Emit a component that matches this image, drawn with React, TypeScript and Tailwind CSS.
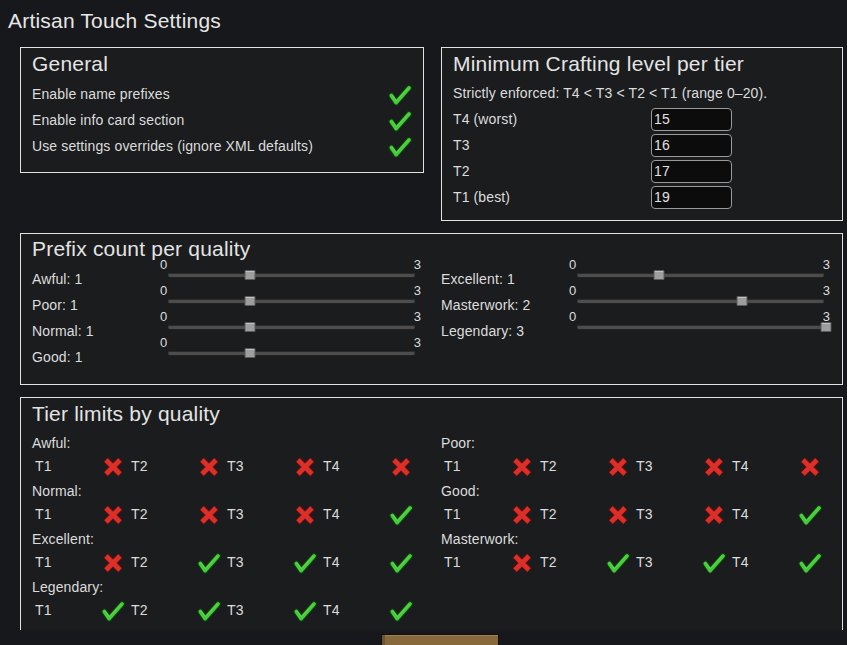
import React from "react";

const Check = () => (
  <svg width="24" height="24" viewBox="0 0 24 24" className="block shrink-0">
    <path d="M3.4 12.6 L8.2 19.6 L21 5" fill="none" stroke="#143a11" strokeWidth="6" strokeLinecap="round" strokeLinejoin="round" />
    <path d="M3.4 12.6 L8.2 19.6 L21 5" fill="none" stroke="#44cc3a" strokeWidth="3.8" strokeLinecap="round" strokeLinejoin="round" />
    <path d="M4.3 12.4 L8.2 17.8 L20.2 5.4" fill="none" stroke="#6be05f" strokeWidth="1" strokeLinecap="round" strokeLinejoin="round" opacity="0.6" />
  </svg>
);

const Cross = () => (
  <svg width="24" height="24" viewBox="0 0 24 24" className="block shrink-0">
    <path d="M4.6 4.6 L19.4 19.4 M19.4 4.6 L4.6 19.4" fill="none" stroke="#5c1211" strokeWidth="6.6" />
    <path d="M5 5 L19 19 M19 5 L5 19" fill="none" stroke="#dd2f2a" strokeWidth="4.6" />
  </svg>
);

function Slider({ value }: { value: number }) {
  const px = Math.min((value / 3) * 247, 249 - 3);
  return (
    <div className="w-[261px] -mt-[9px] shrink-0">
      <div className="flex justify-between text-[13px] leading-[15px] h-[15px]">
        <span>0</span>
        <span>3</span>
      </div>
      <div className="relative ml-[8px] mr-[6px] mt-[1px] h-[4px] rounded-[2px] bg-[#4d4d4d] shadow-[inset_0_1px_0_#2a2a2a,0_1px_0_#222]">
        <div
          className="absolute top-1/2 w-[11px] h-[10px] -translate-y-1/2 -translate-x-1/2 bg-[#9e9e9e] border border-[#5a5a5a] rounded-[1px] shadow-[inset_0_1px_0_#c0c0c0]"
          style={{ left: `${value === 3 ? px + 3 : px}px` }}
        />
      </div>
    </div>
  );
}

function PrefixRow({ label, value }: { label: string; value: number }) {
  return (
    <div className="flex h-[26px]">
      <div className="w-[128px] leading-[26px] shrink-0">{label}</div>
      <Slider value={value} />
    </div>
  );
}

type Quality = { name: string; tiers: boolean[] };

function TierBlock({ q }: { q: Quality }) {
  return (
    <div>
      <div className="h-[24px] leading-[24px]">{q.name}:</div>
      <div className="flex h-[24px]">
        {q.tiers.map((ok, i) => (
          <div key={i} className="w-[96px] flex items-center pl-[3px]">
            <div className="w-[66px] leading-[22px] pb-[2px]">T{i + 1}</div>
            {ok ? <Check /> : <Cross />}
          </div>
        ))}
      </div>
    </div>
  );
}

const Heading = ({ children }: { children: React.ReactNode }) => (
  <div className="h-[24px] leading-[24px] text-[21px] tracking-[0.2px] text-[#e4e4e4]">{children}</div>
);

export default function App() {
  const leftQ: Quality[] = [
    { name: "Awful", tiers: [false, false, false, false] },
    { name: "Normal", tiers: [false, false, false, true] },
    { name: "Excellent", tiers: [false, true, true, true] },
    { name: "Legendary", tiers: [true, true, true, true] },
  ];
  const rightQ: Quality[] = [
    { name: "Poor", tiers: [false, false, false, false] },
    { name: "Good", tiers: [false, false, false, true] },
    { name: "Masterwork", tiers: [false, true, true, true] },
  ];
  const tiers = [
    { label: "T4 (worst)", v: "15" },
    { label: "T3", v: "16" },
    { label: "T2", v: "17" },
    { label: "T1 (best)", v: "19" },
  ];
  return (
    <div className="w-[847px] h-[645px] overflow-hidden bg-[#16181b] text-[#dcdcdc] text-[14px] tracking-[0.12px] font-['Liberation_Sans',Arial,sans-serif]">
      <div className="h-[47px] pl-[8px] pt-[9px] text-[21px] leading-[24px] tracking-[0.2px] text-[#e6e6e6]">
        Artisan Touch Settings
      </div>
      <div className="h-[583px] overflow-hidden pl-[20px] pr-[4px] flex flex-col gap-[12px]">
        <div className="flex items-start gap-[17px]">
          <div className="w-[404px] h-[126px] border border-[#e2e2e2] bg-[#1b1c1e] px-[11px] pt-[4px]">
            <Heading>General</Heading>
            <div className="mt-[5px]">
              {[
                "Enable name prefixes",
                "Enable info card section",
                "Use settings overrides (ignore XML defaults)",
              ].map((t) => (
                <div key={t} className="h-[26px] flex items-center justify-between">
                  <span>{t}</span>
                  <span className="mt-[1px]"><Check /></span>
                </div>
              ))}
            </div>
          </div>
          <div className="w-[402px] h-[174px] border border-[#e2e2e2] bg-[#1b1c1e] px-[11px] pt-[4px]">
            <Heading>Minimum Crafting level per tier</Heading>
            <div className="mt-[4px] h-[26px] leading-[26px]">Strictly enforced: T4 &lt; T3 &lt; T2 &lt; T1 (range 0–20).</div>
            {tiers.map((t) => (
              <div key={t.label} className="h-[26px] flex items-center">
                <div className="w-[198px] shrink-0">{t.label}</div>
                <div className="w-[81px] h-[23px] border border-[#9a9a9a] rounded-[4px] bg-[#0c0c0d] pl-[2px] leading-[21px] text-[#e0e0e0]">
                  {t.v}
                </div>
              </div>
            ))}
          </div>
        </div>

        <div className="w-[823px] h-[152px] shrink-0 border border-[#e2e2e2] bg-[#1b1c1e] px-[11px] pt-[3px]">
          <Heading>Prefix count per quality</Heading>
          <div className="mt-[5px] grid grid-cols-[409px_1fr]">
            <div>
              <PrefixRow label="Awful: 1" value={1} />
              <PrefixRow label="Poor: 1" value={1} />
              <PrefixRow label="Normal: 1" value={1} />
              <PrefixRow label="Good: 1" value={1} />
            </div>
            <div>
              <PrefixRow label="Excellent: 1" value={1} />
              <PrefixRow label="Masterwork: 2" value={2} />
              <PrefixRow label="Legendary: 3" value={3} />
            </div>
          </div>
        </div>

        <div className="w-[823px] h-[300px] shrink-0 border border-[#e2e2e2] bg-[#1b1c1e] px-[11px] pt-[4px]">
          <Heading>Tier limits by quality</Heading>
          <div className="mt-[5px] grid grid-cols-[409px_1fr]">
            <div>
              {leftQ.map((q) => (
                <TierBlock key={q.name} q={q} />
              ))}
            </div>
            <div>
              {rightQ.map((q) => (
                <TierBlock key={q.name} q={q} />
              ))}
            </div>
          </div>
        </div>
      </div>
      <div className="pt-[4px] pl-[381px]">
        <div className="w-[118px] h-[30px] border border-[#111] bg-[#87693c] shadow-[inset_3px_0_0_#6e5430,inset_0_1px_0_#a08050]" />
      </div>
    </div>
  );
}
